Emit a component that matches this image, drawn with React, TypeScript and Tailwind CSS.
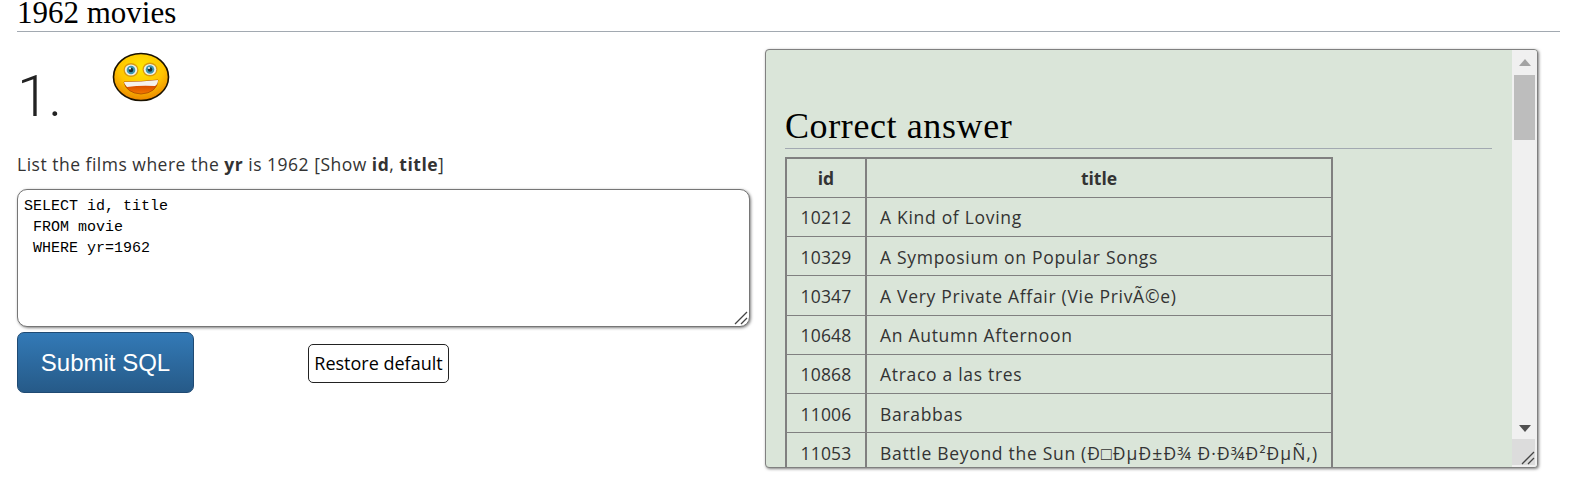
import React from 'react';

const rows = [
  ['10212', 'A Kind of Loving'],
  ['10329', 'A Symposium on Popular Songs'],
  ['10347', 'A Very Private Affair (Vie PrivÃ©e)'],
  ['10648', 'An Autumn Afternoon'],
  ['10868', 'Atraco a las tres'],
  ['11006', 'Barabbas'],
];

function Smiley() {
  return (
    <svg width="58" height="50" viewBox="0 0 58 50" className="block">
      <defs>
        <radialGradient id="face" cx="0.5" cy="0.3" r="0.75">
          <stop offset="0" stopColor="#ffe600" />
          <stop offset="0.55" stopColor="#ffc400" />
          <stop offset="1" stopColor="#e87c00" />
        </radialGradient>
        <linearGradient id="mouth" x1="0" y1="0" x2="0" y2="1">
          <stop offset="0" stopColor="#c92c00" />
          <stop offset="1" stopColor="#f27a00" />
        </linearGradient>
      </defs>
      <ellipse cx="29" cy="25" rx="27.5" ry="23.5" fill="url(#face)" stroke="#1a1200" strokeWidth="1.6" />
      <ellipse cx="19" cy="18" rx="7.5" ry="7" fill="#d99a10" />
      <ellipse cx="38" cy="17.5" rx="7.5" ry="7" fill="#d99a10" />
      <ellipse cx="19" cy="18" rx="6.2" ry="5.6" fill="#eef2ea" />
      <ellipse cx="38" cy="17.5" rx="6.2" ry="5.6" fill="#eef2ea" />
      <circle cx="19" cy="18" r="4.3" fill="#3f97b0" />
      <circle cx="38" cy="17.5" r="4.3" fill="#3f97b0" />
      <circle cx="19" cy="18" r="2.3" fill="#14303c" />
      <circle cx="38" cy="17.5" r="2.3" fill="#14303c" />
      <circle cx="18" cy="16.6" r="1" fill="#fff" />
      <circle cx="37" cy="16.1" r="1" fill="#fff" />
      <path d="M12 30 Q29 30 46 28 Q45 41 29 42 Q14 41 12 30 Z" fill="url(#mouth)" stroke="#a84a00" strokeWidth="0.8" />
      <path d="M12 30 Q29 30 46 28 Q46 32 43 34 Q29 33 15 35 Q12 32 12 30 Z" fill="#f6f2ee" />
    </svg>
  );
}

function ResizeGrip() {
  return (
    <svg width="14" height="14" viewBox="0 0 14 14">
      <path d="M1 13 L13 1 M7 13 L13 7" stroke="#444" strokeWidth="1.3" fill="none" />
    </svg>
  );
}

export default function App() {
  return (
    <div className="h-[479px] overflow-hidden bg-white text-[#333] font-['Open_Sans',sans-serif]">
      <div className="mx-[17px] h-[32px] flex items-end border-b border-[#a2a9b1]">
        <h2 className="font-['Liberation_Serif',serif] text-[31px] leading-[26px] text-black mb-[5px]">1962 movies</h2>
      </div>

      <div className="flex pl-[17px] pr-[39px] pt-[17px] gap-[15px]">
        <div className="w-[733px] shrink-0">
          <div className="flex h-[90px] items-start">
            <span className="font-['Roboto',sans-serif] font-light text-[58px] leading-[90px] mt-[2px] tracking-[-1px] text-[#222] w-[95px]">1.</span>
            <div className="pt-[3px]"><Smiley /></div>
          </div>

          <p className="mt-[14px] text-[17.5px] leading-[22px] tracking-[0.5px]">
            List the films where the <b>yr</b> is 1962 [Show <b>id</b>, <b>title</b>]
          </p>

          <div className="relative mt-[14px]">
            <textarea
              readOnly
              className="block resize-none w-[733px] h-[138px] rounded-[10px] border border-[#767676] px-[6px] pt-[6px] pb-[4px] font-['Liberation_Mono',monospace] text-[15px] leading-[21px] text-black bg-white shadow-[1px_1px_3px_rgba(0,0,0,0.5)] outline-none"
              value={'SELECT id, title\n FROM movie\n WHERE yr=1962'}
            />
            <div className="absolute right-[2px] bottom-[2px] leading-none">
              <ResizeGrip />
            </div>
          </div>

          <div className="flex items-center mt-[5px]">
            <button className="w-[177px] h-[61px] rounded-[7px] border border-[#1f4a73] bg-gradient-to-b from-[#337ab7] to-[#265a88] text-white text-[24px] font-['Liberation_Sans',sans-serif]">
              Submit SQL
            </button>
            <button className="ml-[114px] mt-[2px] w-[141px] h-[39px] rounded-[5px] border border-[#222] bg-white text-black text-[18px]">
              Restore default
            </button>
          </div>
        </div>

        <div className="w-[774px] h-[419px] flex overflow-hidden rounded-[4px] border border-[#808080] bg-[#dae5d9] shadow-[1px_1px_3px_rgba(0,0,0,0.5)]">
          <div className="flex-1 min-w-0 overflow-hidden pl-[19px] pr-[20px]">
            <h2 className="mt-[54px] h-[45px] border-b border-[#a2a9b1] font-['Liberation_Serif',serif] text-[36px] leading-[44px] tracking-[0.6px] text-black">
              Correct answer
            </h2>
            <table className="mt-[8px] w-[548px] table-fixed border-collapse border-2 border-[#808080] text-[17.5px]">
              <thead>
                <tr className="h-[39.25px]">
                  <th className="w-[80px] border border-r-2 border-[#808080] font-bold pt-[1px]">id</th>
                  <th className="border border-[#808080] font-bold pt-[1px]">title</th>
                </tr>
              </thead>
              <tbody>
                {rows.map(([id, title]) => (
                  <tr key={id} className="h-[39.25px]">
                    <td className="border border-r-2 border-[#808080] text-center tracking-[0.2px] pt-[1px]">{id}</td>
                    <td className="border border-[#808080] pl-[13px] whitespace-nowrap tracking-[0.7px] pt-[1px]">{title}</td>
                  </tr>
                ))}
                <tr className="h-[39.25px]">
                  <td className="border border-r-2 border-[#808080] text-center tracking-[0.2px] pt-[1px]">11053</td>
                  <td className="border border-[#808080] pl-[13px] whitespace-nowrap tracking-[0.7px] pt-[1px]">
                    Battle Beyond the Sun <span className="tracking-[1.1px]">(Ð□ÐµÐ±Ð¾ Ð·Ð¾Ð²ÐµÑ‚)</span>
                  </td>
                </tr>
              </tbody>
            </table>
          </div>

          <div className="w-[25px] shrink-0 flex flex-col bg-[#f0f0f0]">
            <div className="h-[25px] flex items-center justify-center">
              <svg width="12" height="7" viewBox="0 0 12 7"><path d="M6 0 L12 7 L0 7 Z" fill="#a3a3a3" /></svg>
            </div>
            <div className="mx-[2px] h-[65px] bg-[#bdbdbd]" />
            <div className="flex-1 flex items-end justify-center pb-[7px]">
              <svg width="12" height="7" viewBox="0 0 12 7"><path d="M0 0 L12 0 L6 7 Z" fill="#505050" /></svg>
            </div>
            <div className="h-[26px] mr-[2px] mb-[2px] bg-[#dcdcdc] flex items-end justify-end">
              <ResizeGrip />
            </div>
          </div>
        </div>
      </div>
    </div>
  );
}
